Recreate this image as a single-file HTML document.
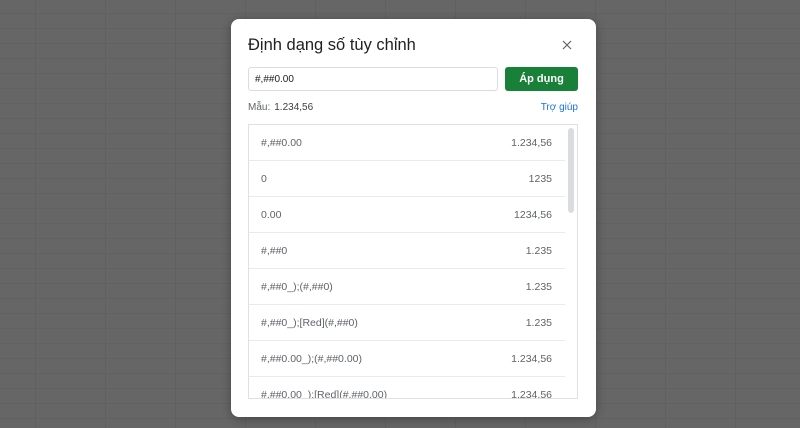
<!DOCTYPE html>
<html><head><meta charset="utf-8"><style>
*{margin:0;padding:0;box-sizing:border-box}
body{width:800px;height:428px;overflow:hidden;background-color:#666;font-family:"Liberation Sans",Arial,sans-serif;position:relative;
background-image:linear-gradient(to right,#606060 1px,transparent 1px),linear-gradient(to bottom,#616161 1px,transparent 1px);
background-size:70px 15px;background-position:35px 13px}
.dlg{position:absolute;left:231px;top:19px;width:365px;height:398px;background:#fff;border-radius:8px;box-shadow:0 2px 10px rgba(0,0,0,.3)}
.t{position:absolute;left:17px;top:17px;font-size:16.5px;color:#202124}
.x{position:absolute;left:331px;top:21px}
.inp{position:absolute;left:17px;top:48px;width:250px;height:24px;border:1px solid #dadce0;border-radius:3px;font-size:10px;padding:6px 6px;color:#202124}
.btn{position:absolute;left:274px;top:48px;width:73px;height:24px;background:#188038;border-radius:3px;color:#fff;font-size:11px;font-weight:bold;text-align:center;line-height:24px}
.m{position:absolute;left:17px;top:83px;font-size:10px;color:#5f6368}
.m b{font-weight:normal;color:#3c4043;margin-left:4px}
.h{position:absolute;right:18px;top:83px;font-size:10px;color:#1a73e8}
.list{position:absolute;left:17px;top:105px;width:330px;height:275px;border:1px solid #e0e0e0;overflow:hidden}
.r{height:36px;margin-right:12px;border-bottom:1px solid #e8eaed;display:flex;justify-content:space-between;align-items:center;padding:0 13px 0 12px;font-size:10.5px;color:#5f6368}
.sb{position:absolute;right:3px;top:3px;width:6px;height:85px;background:#dadce0;border-radius:3px}
</style></head><body>
<div class="dlg">
<div class="t">Định dạng số tùy chỉnh</div>
<svg class="x" width="10" height="10" viewBox="0 0 10 10"><path d="M1 1L9 9M9 1L1 9" stroke="#5f6368" stroke-width="1.2"/></svg>
<div class="inp">#,##0.00</div>
<div class="btn">Áp dụng</div>
<div class="m">Mẫu:<b>1.234,56</b></div>
<div class="h">Trợ giúp</div>
<div class="list">
<div class="r"><span>#,##0.00</span><span>1.234,56</span></div>
<div class="r"><span>0</span><span>1235</span></div>
<div class="r"><span>0.00</span><span>1234,56</span></div>
<div class="r"><span>#,##0</span><span>1.235</span></div>
<div class="r"><span>#,##0_);(#,##0)</span><span>1.235</span></div>
<div class="r"><span>#,##0_);[Red](#,##0)</span><span>1.235</span></div>
<div class="r"><span>#,##0.00_);(#,##0.00)</span><span>1.234,56</span></div>
<div class="r"><span>#,##0.00_);[Red](#,##0.00)</span><span>1.234,56</span></div>
<div class="sb"></div>
</div>
</div>
</body></html>
